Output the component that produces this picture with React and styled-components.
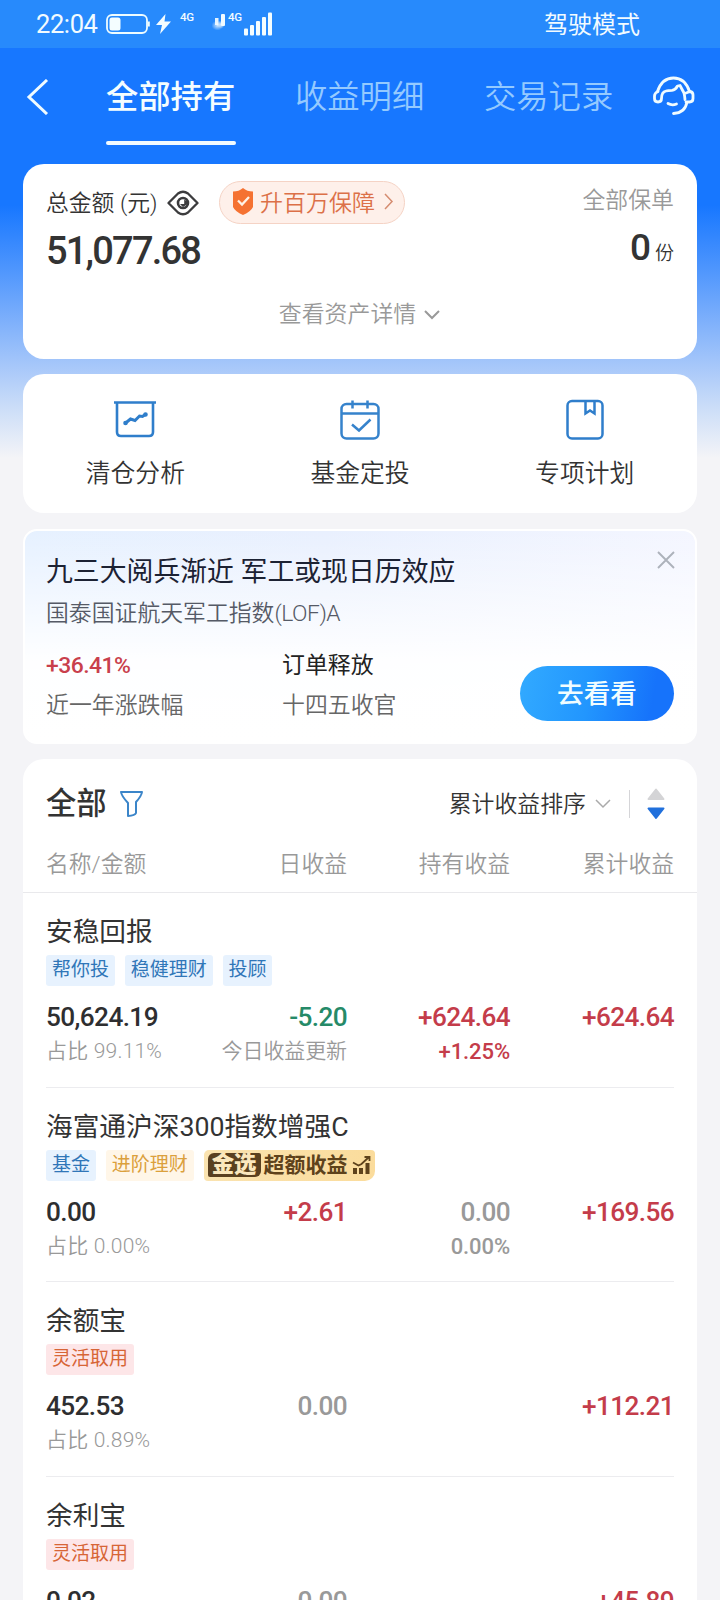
import React from "react";
import styled, { createGlobalStyle } from "styled-components";

const GlobalStyle = createGlobalStyle`
  * { box-sizing: border-box; }
  body {
    margin: 0;
    background: #f4f4f7;
    font-family: Roboto, "Noto Sans CJK SC", sans-serif;
    color: #333;
  }
  svg { display: block; flex: none; }
`;

const Screen = styled.div`
  width: 720px;
  height: 1600px;
  overflow: hidden;
  background: linear-gradient(
    180deg,
    #1777ff 0,
    #1777ff 205px,
    #4f96fd 270px,
    #a3c5fa 362px,
    #c9dcf8 405px,
    #f4f4f7 458px
  );
`;

const StatusBar = styled.header`
  height: 48px;
  padding: 0 80px 0 36px;
  display: flex;
  align-items: center;
  justify-content: space-between;
  background: #278afc;
  color: #f2fbff;
`;

const StatusLeft = styled.div`
  display: flex;
  align-items: center;
`;

const Clock = styled.span`
  width: 70px;
  font-size: 25.5px;
  line-height: 32px;
  letter-spacing: -0.4px;
`;

const Network = styled.span`
  align-self: flex-start;
  margin-left: ${(p) => p.$gap}px;
  padding-top: 2px;
  width: 16px;
  font-size: 11.5px;
  font-weight: 500;
  line-height: 14px;
  letter-spacing: -0.3px;
`;

const Mode = styled.span`
  padding-top: 2px;
  font-size: 24px;
  line-height: 32px;
`;

const NavBar = styled.nav`
  height: 116px;
  display: flex;
  padding: 0 25px 0 26px;
`;

const NavIcon = styled.div`
  width: ${(p) => p.$width}px;
  padding-top: ${(p) => p.$top}px;
`;

const Tabs = styled.div`
  flex: 1;
  display: flex;
  gap: 59.5px;
`;

const Tab = styled.div`
  width: 129.5px;
  padding-top: 28px;
  font-size: 32.3px;
  line-height: 42px;
  white-space: nowrap;
  font-weight: ${(p) => (p.$active ? 500 : 350)};
  color: ${(p) => (p.$active ? "#f4fdff" : "#94caff")};

  &::after {
    content: "";
    display: block;
    height: 4px;
    margin-top: 23px;
    border-radius: 2px;
    background: ${(p) => (p.$active ? "#f2fbff" : "transparent")};
  }
`;

const Card = styled.section`
  width: 674px;
  height: ${(p) => p.$height}px;
  margin: 0 auto ${(p) => p.$gap || 0}px;
  border-radius: ${(p) => p.$radius || 21}px;
  background: #fff;
`;

const AssetCard = styled(Card)`
  padding: 17px 23px 0 23px;
`;

const AssetTop = styled.div`
  display: flex;
  justify-content: space-between;
  height: 117px;
`;

const AssetLabel = styled.div`
  display: flex;
  align-items: center;
  height: 43px;
  font-size: 22.8px;
  font-weight: 350;
  white-space: nowrap;
`;

const LabelText = styled.span`
  width: 121px;
  padding-bottom: 2px;
`;

const Protection = styled.div`
  display: flex;
  align-items: center;
  width: 186px;
  height: 43px;
  margin-left: 20px;
  padding: 0 11px 2px 12px;
  border: 1px solid #f5d3c5;
  border-radius: 22px;
  background: #fef0ea;
  color: #dc7048;
  font-size: 23px;
  font-weight: 350;

  span { margin: -2px 9px 0 6px; }
`;

const Total = styled.div`
  margin-top: 7px;
  font-size: 38px;
  font-weight: 500;
  line-height: 40px;
  letter-spacing: -1.8px;
`;

const Policies = styled.div`
  padding-top: 4px;
  text-align: right;
  color: #999;
  font-size: 22.9px;
  font-weight: 350;
  line-height: 32px;
`;

const PolicyCount = styled.div`
  display: flex;
  justify-content: flex-end;
  align-items: baseline;
  gap: 5px;
  margin-top: 11px;
  color: #333;
  font-size: 19px;
  line-height: 40px;

  b { font-size: 37px; font-weight: 500; letter-spacing: -1px; }
`;

const Details = styled.div`
  display: flex;
  align-items: center;
  justify-content: center;
  gap: 8px;
  height: 34px;
  padding-right: 1px;
  color: #999;
  font-size: 22.9px;
  font-weight: 350;
  line-height: 30px;
`;

const ShortcutCard = styled(Card)`
  display: flex;
`;

const Shortcut = styled.div`
  flex: 1;
  display: flex;
  flex-direction: column;
  align-items: center;
  padding-top: 25px;
  font-size: 24.8px;
  line-height: 34px;
  font-weight: 350;

  span { margin-top: 16px; }
`;

const PromoCard = styled(Card)`
  display: flex;
  justify-content: space-between;
  padding: 20px 21px 0 21px;
  border: 2px solid #fff;
  background:
    linear-gradient(180deg, rgba(255, 255, 255, 0) 0, rgba(255, 255, 255, 0.96) 62%, #fff 100%),
    linear-gradient(90deg, #e6f1ff 0, #e9f0fe 45%, #f4f6ff 100%);
`;

const PromoTitle = styled.div`
  padding-top: 1px;
  color: #1c2233;
  font-size: 26.85px;
  line-height: 40px;
  white-space: nowrap;
`;

const PromoFund = styled.div`
  margin-top: 5px;
  color: #555a66;
  font-size: 22.85px;
  font-weight: 350;
  line-height: 34px;

  span { letter-spacing: -0.5px; }
`;

const PromoFacts = styled.div`
  display: grid;
  grid-template-columns: 236px auto;
  margin-top: 18px;
  row-gap: 6px;
  font-size: 22.9px;
  line-height: 34px;
`;

const Fact = styled.div`
  color: ${(p) => (p.$rise ? "#c93f4c" : "#222")};
  font-weight: ${(p) => (p.$rise ? 500 : 400)};
  letter-spacing: ${(p) => (p.$rise ? "-0.5px" : 0)};
`;

const FactLabel = styled.div`
  color: #666;
  font-weight: 350;
`;

const PromoSide = styled.div`
  display: flex;
  flex-direction: column;
  align-items: flex-end;
`;

const CloseButton = styled.div`
  margin-right: -1px;
`;

const GoButton = styled.button`
  width: 154px;
  height: 55px;
  margin-top: 97px;
  padding: 0 0 4px;
  border: 0;
  border-radius: 28px;
  background: linear-gradient(100deg, #32aaff 0, #2296fe 45%, #1673fb 85%);
  color: #f1fdff;
  font: 500 26.6px Roboto, "Noto Sans CJK SC", sans-serif;
`;

const ListHead = styled.div`
  display: flex;
  align-items: center;
  height: 90px;
  padding: 0 32px 0 23px;
`;

const ListTitle = styled.h2`
  flex: 1;
  display: flex;
  align-items: center;
  gap: 12px;
  margin: 0;
  font-size: 30.3px;
  font-weight: 500;
  line-height: 40px;

  span { margin-top: -1px; }
`;

const SortLabel = styled.span`
  margin: -4px 9px 0 0;
  font-size: 22.9px;
  font-weight: 350;
`;

const Separator = styled.i`
  width: 1px;
  height: 28px;
  margin: 0 17px 0 18px;
  background: #d5d5d8;
`;

const Columns = styled.div`
  display: grid;
  grid-template-columns: 140px 161px 163px 164px;

  > :not(:first-child) { text-align: right; }
`;

const TableHead = styled(Columns)`
  height: 44px;
  padding: 1px 23px 0 23px;
  border-bottom: 1px solid #e9e9ec;
  color: #999;
  font-size: 22.8px;
  font-weight: 350;
  line-height: 30px;
`;

const Holding = styled.article`
  height: 194.6px;
  margin: 0 23px 0 23px;
  padding-top: 20px;
  border-bottom: 1px solid #ececef;
`;

const FundName = styled.div`
  height: 42px;
  font-size: 26.7px;
  line-height: 38px;
`;

const Tags = styled.div`
  display: flex;
  gap: 10px;
`;

const tones = {
  blue: ["#e7f2fe", "#3076b8"],
  amber: ["#fff6e8", "#dba03c"],
  red: ["#fde6e8", "#d76536"],
};

const Tag = styled.span`
  height: 31px;
  padding: 0 5.9px;
  border-radius: 3px;
  background: ${(p) => tones[p.$tone][0]};
  color: ${(p) => tones[p.$tone][1]};
  font-size: 19px;
  line-height: 29px;
`;

const GoldTag = styled.span`
  display: flex;
  align-items: center;
  width: 171px;
  height: 31px;
  padding-left: 4px;
  border-radius: 5px 4px 10px 4px;
  background: linear-gradient(90deg, #fae3b0, #fbdc9c);
  color: #5e421b;
  font-size: 21px;
  font-weight: 700;
  line-height: 24px;
  white-space: nowrap;

  b {
    width: 53px;
    height: 24px;
    margin-right: 3px;
    border-radius: 6px 2px 6px 2px;
    background: #5a4020;
    color: #fbe7bd;
    font-size: 22.4px;
    font-weight: 900;
    line-height: 22px;
    text-align: center;
  }
  svg { margin-left: 4px; }
`;

const Figures = styled(Columns)`
  margin-top: 13px;
  white-space: nowrap;
`;

const inks = { dark: "#2e2e30", red: "#c43c4a", green: "#258a68", gray: "#999" };

const Amount = styled.div`
  color: ${(p) => inks[p.$ink]};
  font-size: 26.2px;
  font-weight: 500;
  line-height: 36px;
  letter-spacing: -0.6px;
`;

const Note = styled.div`
  color: ${(p) => inks[p.$ink || "gray"]};
  font-size: ${(p) => (p.$strong ? 22 : 21)}px;
  font-weight: ${(p) => (p.$strong ? 500 : 350)};
  line-height: 33px;
  letter-spacing: ${(p) => (p.$share ? 0.2 : -0.1)}px;
`;

const Stroke = ({ w, h, color, width = 2, children, ...rest }) => (
  <svg width={w} height={h} viewBox={`0 0 ${w} ${h}`} fill="none" stroke={color} strokeWidth={width} {...rest}>
    {children}
  </svg>
);

const BatteryIcon = () => (
  <Stroke w={44} h={20} color="#eefcff" width={1.8}>
    <rect x="1" y="1" width="40" height="18" rx="5" />
    <rect x="3.5" y="3.5" width="11" height="13" rx="2.5" fill="#f4fdff" stroke="none" />
    <path d="M42.7 7.5v5" strokeWidth="2.2" />
  </Stroke>
);

const Bolt = styled.svg`
  margin-left: 6px;
`;

const BoltIcon = () => (
  <Bolt width="15" height="20" viewBox="0 0 15 20" fill="#f4fdff">
    <path d="M9.5 0 0 11h6L4 20 15 7.5H8.5Z" />
  </Bolt>
);

const FadedBars = styled.svg`
  margin: -3px 0 0 14px;
`;

const WeakSignal = () => (
  <FadedBars width="16" height="20" viewBox="0 0 16 20">
    <defs>
      <radialGradient id="smudge">
        <stop offset="0" stopColor="#f2fbff" stopOpacity="0.8" />
        <stop offset="1" stopColor="#f2fbff" stopOpacity="0" />
      </radialGradient>
    </defs>
    <rect x="5" y="5" width="3.5" height="7" fill="#e4f3ff" />
    <rect x="11" y="1" width="4" height="12" rx="1" fill="#f2fbff" />
    <ellipse cx="7.5" cy="12.5" rx="6" ry="5" fill="url(#smudge)" />
    <ellipse cx="11" cy="11.5" rx="4" ry="4" fill="url(#smudge)" />
  </FadedBars>
);

const SignalIcon = () => (
  <svg width="29" height="24" viewBox="0 0 29 24" fill="#f4fdff">
    <rect x="0" y="16.5" width="4" height="7" rx="1" />
    <rect x="6" y="13" width="4" height="10.5" rx="1" />
    <rect x="12" y="9" width="4" height="14.5" rx="1" />
    <rect x="18" y="5" width="4" height="18.5" rx="1" />
    <rect x="24" y="0.5" width="4" height="23" rx="1" />
  </svg>
);

const BackIcon = () => (
  <Stroke w={23} h={36} color="#f0fbff" width={3}>
    <path d="M21 1 3 18l18 17" />
  </Stroke>
);

const ServiceIcon = () => (
  <Stroke w={42} h={40} color="#f0fbff" width={2.8} strokeLinecap="round" strokeLinejoin="round">
    <path d="M4.5 15.5Q9 2 20.500 2t16 13.500" />
    <path d="M5 15.500Q1.500 17 1.500 20v2.500Q1.500 26 5 26t3.500-3.500Q8.500 16 13 15q2-.7 6-.7 3.500-.3 5.500-4.300l2.500-.5 4 7.500q.5 1.500 1 6.500" />
    <path d="M33 17l4-1.500Q40 16 40 19v3.500q0 3.500-3.500 3.500H33M34 26q-2 11-13.500 11.500M15 27.500q4 2.300 8.500.5" />
  </Stroke>
);

const EyeIcon = () => (
  <Stroke w={32} h={26} color="#3c3c3e" width={2.3}>
    <path d="M1.500 13 11 3.500q5-3.500 10 0L30.500 13 21 22.500q-5 3.500-10 0Z" strokeLinejoin="round" />
    <circle cx="16" cy="13" r="5" strokeWidth="2.600" />
    <path d="M17.200 9.500v4.600H13L16 17l4-2.500.5-3Z" fill="#3c3c3e" stroke="none" />
  </Stroke>
);

const ShieldIcon = () => (
  <svg width="22" height="27" viewBox="0 0 22 27">
    <path d="M11 0q4 3.500 10 3.500V19q-2 4.500-10 8Q3 23.500 1 19V3.500Q7 3.500 11 0Z" fill="#f57232" />
    <path d="m6 12.500 4 4 7-7.500" fill="none" stroke="#fff3e7" strokeWidth="2.300" />
  </svg>
);

const ChevronRight = () => (
  <Stroke w={10} h={17} color="#d58c70" width={1.5}>
    <path d="m1 1 7 7.500L1 16" />
  </Stroke>
);

const ChevronDown = ({ color = "#999", width = 2 }) => (
  <Stroke w={16} h={10} color={color} width={width}>
    <path d="m1 1 7 7 7-7" />
  </Stroke>
);

const AnalysisIcon = () => (
  <Stroke w={44} h={42} color="#2f7ecb" width={2.6}>
    <path d="M1 3.500h42M4 4v29q0 4 4 4h28q4 0 4-4V4" />
    <path d="m12 24.500 5.500-4.500 4.500 1.500 4.500-4.500 3 .5 3.500-2.500" strokeWidth="3" />
    <circle cx="12.500" cy="24" r="1" fill="#2f7ecb" />
    <circle cx="32.500" cy="15.500" r="1" fill="#2f7ecb" />
  </Stroke>
);

const CalendarIcon = () => (
  <Stroke w={44} h={42} color="#3683cc" width={2.5}>
    <rect x="3.500" y="5" width="37" height="34.500" rx="5" />
    <path d="M4 14.500h36M14.500 1.500v8M29.500 1.500v8M14 25.500l7 6 11.500-11" />
  </Stroke>
);

const PlanIcon = () => (
  <Stroke w={44} h={42} color="#2f7ecb" width={2.5}>
    <rect x="4.500" y="2" width="35" height="37.500" rx="4.500" />
    <path d="M22.500 2v12.500l4.500-3 4.500 3V2" />
  </Stroke>
);

const CloseIcon = () => (
  <Stroke w={18} h={18} color="#adb2bb" width={1.9}>
    <path d="m1 1 16 16M17 1 1 17" />
  </Stroke>
);

const FilterIcon = () => (
  <Stroke w={25} h={28} color="#3b85c9" width={2} strokeLinejoin="round">
    <path d="M2 2h21q-.5 4-6 10v11q-1 2.500-8 3V13Q2.500 6 2 2Z" />
  </Stroke>
);

const SortArrows = () => (
  <svg width="18" height="32" viewBox="0 0 18 32">
    <path d="M9 1.500 16.500 11h-15Z" fill="#d4d4d6" stroke="#d4d4d6" strokeLinejoin="round" strokeWidth="2" />
    <path d="M9 30 1.500 20.500h15Z" fill="#2170dc" stroke="#2170dc" strokeLinejoin="round" strokeWidth="2" />
  </svg>
);

const TrendIcon = () => (
  <Stroke w={19} h={20} color="#5e421b">
    <path d="M3 19v-6M9 19v-6M15.500 19V8" strokeWidth="4" />
    <path d="m1 7.500 5.500 3 3-1.500L17 2M12.500 2H17.500v4" strokeWidth="1.800" />
  </Stroke>
);

const holdings = [
  {
    name: "安稳回报",
    tags: [["帮你投", "blue"], ["稳健理财", "blue"], ["投顾", "blue"]],
    amount: "50,624.19",
    share: "占比 99.11%",
    daily: ["-5.20", "green", "今日收益更新"],
    held: ["+624.64", "red", "+1.25%"],
    total: "+624.64",
  },
  {
    name: "海富通沪深300指数增强C",
    tags: [["基金", "blue"], ["进阶理财", "amber"]],
    gold: true,
    amount: "0.00",
    share: "占比 0.00%",
    daily: ["+2.61", "red"],
    held: ["0.00", "gray", "0.00%"],
    total: "+169.56",
  },
  {
    name: "余额宝",
    tags: [["灵活取用", "red"]],
    amount: "452.53",
    share: "占比 0.89%",
    daily: ["0.00", "gray"],
    total: "+112.21",
  },
  {
    name: "余利宝",
    tags: [["灵活取用", "red"]],
    amount: "0.02",
    daily: ["0.00", "gray"],
    total: "+45.89",
  },
];

const HoldingRow = ({ item }) => {
  const [daily, dailyInk, dailyNote] = item.daily;
  const [held, heldInk, rate] = item.held || [];
  return (
    <Holding>
      <FundName>{item.name}</FundName>
      <Tags>
        {item.tags.map(([label, tone]) => (
          <Tag key={label} $tone={tone}>{label}</Tag>
        ))}
        {item.gold && (
          <GoldTag><b>金选</b>超额收益<TrendIcon /></GoldTag>
        )}
      </Tags>
      <Figures>
        <div>
          <Amount $ink="dark">{item.amount}</Amount>
          {item.share && <Note $share>{item.share}</Note>}
        </div>
        <div>
          <Amount $ink={dailyInk}>{daily}</Amount>
          {dailyNote && <Note>{dailyNote}</Note>}
        </div>
        <div>
          {held && <Amount $ink={heldInk}>{held}</Amount>}
          {rate && <Note $ink={heldInk} $strong>{rate}</Note>}
        </div>
        <Amount $ink="red">{item.total}</Amount>
      </Figures>
    </Holding>
  );
};

export default function App() {
  return (
    <>
      <GlobalStyle />
      <Screen>
        <StatusBar>
          <StatusLeft>
            <Clock>22:04</Clock>
            <BatteryIcon />
            <BoltIcon />
            <Network $gap={9}>4G</Network>
            <WeakSignal />
            <Network $gap={2}>4G</Network>
            <SignalIcon />
          </StatusLeft>
          <Mode>驾驶模式</Mode>
        </StatusBar>
        <NavBar>
          <NavIcon $width={80} $top={31}><BackIcon /></NavIcon>
          <Tabs>
            <Tab $active>全部持有</Tab>
            <Tab>收益明细</Tab>
            <Tab>交易记录</Tab>
          </Tabs>
          <NavIcon $width={42} $top={28}><ServiceIcon /></NavIcon>
        </NavBar>

        <AssetCard $height={195} $gap={15}>
          <AssetTop>
            <div>
              <AssetLabel>
                <LabelText>总金额 (元)</LabelText>
                <EyeIcon />
                <Protection>
                  <ShieldIcon />
                  <span>升百万保障</span>
                  <ChevronRight />
                </Protection>
              </AssetLabel>
              <Total>51,077.68</Total>
            </div>
            <Policies>
              全部保单
              <PolicyCount><b>0</b>份</PolicyCount>
            </Policies>
          </AssetTop>
          <Details><span>查看资产详情</span><ChevronDown /></Details>
        </AssetCard>

        <ShortcutCard $height={139} $gap={16}>
          <Shortcut><AnalysisIcon /><span>清仓分析</span></Shortcut>
          <Shortcut><CalendarIcon /><span>基金定投</span></Shortcut>
          <Shortcut><PlanIcon /><span>专项计划</span></Shortcut>
        </ShortcutCard>

        <PromoCard $height={215} $gap={15} $radius={14}>
          <div>
            <PromoTitle>九三大阅兵渐近 军工或现日历效应</PromoTitle>
            <PromoFund>国泰国证航天军工指数<span>(LOF)A</span></PromoFund>
            <PromoFacts>
              <Fact $rise>+36.41%</Fact>
              <Fact>订单释放</Fact>
              <FactLabel>近一年涨跌幅</FactLabel>
              <FactLabel>十四五收官</FactLabel>
            </PromoFacts>
          </div>
          <PromoSide>
            <CloseButton><CloseIcon /></CloseButton>
            <GoButton>去看看</GoButton>
          </PromoSide>
        </PromoCard>

        <Card $height={860}>
          <ListHead>
            <ListTitle><span>全部</span><FilterIcon /></ListTitle>
            <SortLabel>累计收益排序</SortLabel>
            <ChevronDown color="#aaa" width={1.5} />
            <Separator />
            <SortArrows />
          </ListHead>
          <TableHead>
            <span>名称/金额</span>
            <span>日收益</span>
            <span>持有收益</span>
            <span>累计收益</span>
          </TableHead>
          {holdings.map((item) => (
            <HoldingRow key={item.name} item={item} />
          ))}
        </Card>
      </Screen>
    </>
  );
}
